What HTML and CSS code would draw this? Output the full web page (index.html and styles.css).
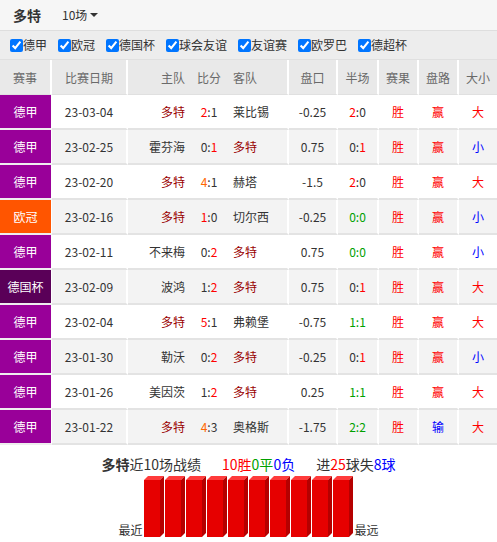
FILE: index.html
```html
<!DOCTYPE html>
<html lang="zh">
<head>
<meta charset="utf-8">
<link rel="stylesheet" href="styles.css">
</head>
<body>
<div class="topbar">
  <span class="team-title">多特</span>
  <span class="count">10场<i class="caret"></i></span>
</div>
<div class="filters">
  <label class="f"><input type="checkbox" checked>德甲</label>
  <label class="f"><input type="checkbox" checked>欧冠</label>
  <label class="f"><input type="checkbox" checked>德国杯</label>
  <label class="f"><input type="checkbox" checked>球会友谊</label>
  <label class="f"><input type="checkbox" checked>友谊赛</label>
  <label class="f"><input type="checkbox" checked>欧罗巴</label>
  <label class="f"><input type="checkbox" checked>德超杯</label>
</div>
<table class="tbl">
  <colgroup>
    <col class="c-comp"><col class="c-date"><col class="c-home"><col class="c-score"><col class="c-away"><col class="c-pk"><col class="c-half"><col class="c-res"><col class="c-pl"><col class="c-dx">
  </colgroup>
  <thead>
    <tr>
      <th class="sep">赛事</th><th class="sep">比赛日期</th><th class="home">主队</th><th>比分</th><th class="away sep">客队</th><th class="sep">盘口</th><th class="sep">半场</th><th class="sep">赛果</th><th class="sep">盘路</th><th>大小</th>
    </tr>
  </thead>
  <tbody>
    <tr>
      <td class="comp bund">德甲</td><td class="sep">23-03-04</td><td class="home dt">多特</td><td class="score"><span class="r">2</span>:1</td><td class="away sep">莱比锡</td><td class="sep">-0.25</td><td class="sep"><span class="r">2</span>:0</td><td class="sep r">胜</td><td class="sep r">赢</td><td class="r">大</td>
    </tr>
    <tr class="alt">
      <td class="comp bund">德甲</td><td class="sep">23-02-25</td><td class="home">霍芬海</td><td class="score">0:<span class="r">1</span></td><td class="away sep dt">多特</td><td class="sep">0.75</td><td class="sep">0:<span class="r">1</span></td><td class="sep r">胜</td><td class="sep r">赢</td><td class="b">小</td>
    </tr>
    <tr>
      <td class="comp bund">德甲</td><td class="sep">23-02-20</td><td class="home dt">多特</td><td class="score"><span class="o">4</span>:1</td><td class="away sep">赫塔</td><td class="sep">-1.5</td><td class="sep"><span class="r">2</span>:0</td><td class="sep r">胜</td><td class="sep r">赢</td><td class="r">大</td>
    </tr>
    <tr class="alt">
      <td class="comp ucl">欧冠</td><td class="sep">23-02-16</td><td class="home dt">多特</td><td class="score"><span class="r">1</span>:0</td><td class="away sep">切尔西</td><td class="sep">-0.25</td><td class="sep g">0:0</td><td class="sep r">胜</td><td class="sep r">赢</td><td class="b">小</td>
    </tr>
    <tr>
      <td class="comp bund">德甲</td><td class="sep">23-02-11</td><td class="home">不来梅</td><td class="score">0:<span class="r">2</span></td><td class="away sep dt">多特</td><td class="sep">0.75</td><td class="sep g">0:0</td><td class="sep r">胜</td><td class="sep r">赢</td><td class="b">小</td>
    </tr>
    <tr class="alt">
      <td class="comp cup">德国杯</td><td class="sep">23-02-09</td><td class="home">波鸿</td><td class="score">1:<span class="r">2</span></td><td class="away sep dt">多特</td><td class="sep">0.75</td><td class="sep">0:<span class="r">1</span></td><td class="sep r">胜</td><td class="sep r">赢</td><td class="r">大</td>
    </tr>
    <tr>
      <td class="comp bund">德甲</td><td class="sep">23-02-04</td><td class="home dt">多特</td><td class="score"><span class="r">5</span>:1</td><td class="away sep">弗赖堡</td><td class="sep">-0.75</td><td class="sep g">1:1</td><td class="sep r">胜</td><td class="sep r">赢</td><td class="r">大</td>
    </tr>
    <tr class="alt">
      <td class="comp bund">德甲</td><td class="sep">23-01-30</td><td class="home">勒沃</td><td class="score">0:<span class="r">2</span></td><td class="away sep dt">多特</td><td class="sep">-0.25</td><td class="sep">0:<span class="r">1</span></td><td class="sep r">胜</td><td class="sep r">赢</td><td class="b">小</td>
    </tr>
    <tr>
      <td class="comp bund">德甲</td><td class="sep">23-01-26</td><td class="home">美因茨</td><td class="score">1:<span class="r">2</span></td><td class="away sep dt">多特</td><td class="sep">0.25</td><td class="sep g">1:1</td><td class="sep r">胜</td><td class="sep r">赢</td><td class="r">大</td>
    </tr>
    <tr class="alt">
      <td class="comp bund">德甲</td><td class="sep">23-01-22</td><td class="home dt">多特</td><td class="score"><span class="o">4</span>:3</td><td class="away sep">奥格斯</td><td class="sep">-1.75</td><td class="sep g">2:2</td><td class="sep r">胜</td><td class="sep b">输</td><td class="r">大</td>
    </tr>
  </tbody>
</table>
<div class="summary">
  <p class="line"><span class="name">多特</span>近10场战绩<span class="gap"></span><span class="r">10胜</span><span class="g">0平</span><span class="b">0负</span><span class="gap"></span>进<span class="r">25</span>球失<span class="b">8球</span></p>
  <div class="chart">
    <span class="lbl">最近</span>
    <svg class="bars" width="210" height="61" viewBox="0 0 210 61">
      <g id="bar">
        <polygon points="0,4 4,0 20,0 16,4" fill="#ff3b3b"/>
        <polygon points="16,4 20,0 20,57 16,61" fill="#b50000"/>
        <rect x="0" y="4" width="16" height="57" fill="#e60000"/>
      </g>
      <use href="#bar" x="21"/>
      <use href="#bar" x="42"/>
      <use href="#bar" x="63"/>
      <use href="#bar" x="84"/>
      <use href="#bar" x="105"/>
      <use href="#bar" x="126"/>
      <use href="#bar" x="147"/>
      <use href="#bar" x="168"/>
      <use href="#bar" x="189"/>
    </svg>
    <span class="lbl">最远</span>
  </div>
</div>
</body>
</html>
```
FILE: styles.css
```css
* { box-sizing: border-box; }
html, body { margin: 0; padding: 0; background: #fff; }
body {
  width: 497px;
  font-family: "Noto Sans CJK SC", "Microsoft YaHei", "Noto Sans", sans-serif;
  font-size: 12px;
  color: #333;
}
.topbar {
  height: 31px;
  background: #f6f6f6;
  border-bottom: 1px solid #dedede;
  display: flex;
  align-items: center;
  padding-left: 13px;
}
.team-title { font-size: 14px; font-weight: bold; color: #333; line-height: 20px; }
.count { margin-left: 21px; font-size: 12px; line-height: 20px; display: inline-flex; align-items: center; }
.caret {
  display: inline-block;
  margin-left: 3px;
  width: 0; height: 0;
  border-left: 4px solid transparent;
  border-right: 4px solid transparent;
  border-top: 4px solid #333;
}
.filters {
  height: 29px;
  background: #ededed;
  border-bottom: 1px solid #e0e0e0;
  display: flex;
  align-items: center;
  padding-left: 10px;
  gap: 11px;
}
.f { display: inline-flex; align-items: center; line-height: 16px; font-size: 12px; color: #333; }
.f input { margin: 0; width: 13px; height: 13px; }
.tbl {
  width: 497px;
  table-layout: fixed;
  border-collapse: separate;
  border-spacing: 0;
}
.c-comp { width: 52px; }
.c-date { width: 76px; }
.c-home { width: 62px; }
.c-score { width: 38px; }
.c-away { width: 61px; }
.c-pk { width: 49px; }
.c-half { width: 41px; }
.c-res { width: 40px; }
.c-pl { width: 40px; }
.c-dx { width: 38px; }
th {
  height: 35px;
  background: #e9e9e9;
  color: #6a6a6a;
  font-weight: normal;
  padding: 0;
  text-align: center;
  border-bottom: 1px solid #e0e0e0;
}
td {
  height: 35px;
  padding: 0;
  text-align: center;
  border-bottom: 2px solid #e3e3e3;
  white-space: nowrap;
}
.sep { border-right: 2px solid #fff; }
tr.alt td { background: #f3f3f3; }
.home { text-align: right; padding-right: 5px; }
.away { text-align: left; padding-left: 5px; }
.comp { color: #fff; border-bottom: 2px solid #eee; border-right: 1px solid #fff; }
tr.alt td.comp.bund, td.comp.bund { background: #990099; }
tr.alt td.comp.ucl, td.comp.ucl { background: #ff5500; }
tr.alt td.comp.cup, td.comp.cup { background: #5a0058; }
.dt { color: #990000; }
.r { color: #ff0000; }
.o { color: #ff6600; }
.g { color: #00a000; }
.b { color: #0000ff; }
.summary { padding-top: 9px; }
.line {
  margin: 0;
  text-align: center;
  font-size: 14px;
  line-height: 20px;
  color: #333;
}
.name { font-weight: bold; }
.gap { display: inline-block; width: 21px; }
.chart {
  margin-top: 2px;
  display: flex;
  justify-content: center;
  align-items: flex-end;
}
.bars { display: block; }
.lbl { font-size: 12px; line-height: 16px; color: #333; margin-bottom: -1px; }
.lbl:first-child { margin-right: 1px; }
.lbl:last-child { margin-left: 1px; }
```
